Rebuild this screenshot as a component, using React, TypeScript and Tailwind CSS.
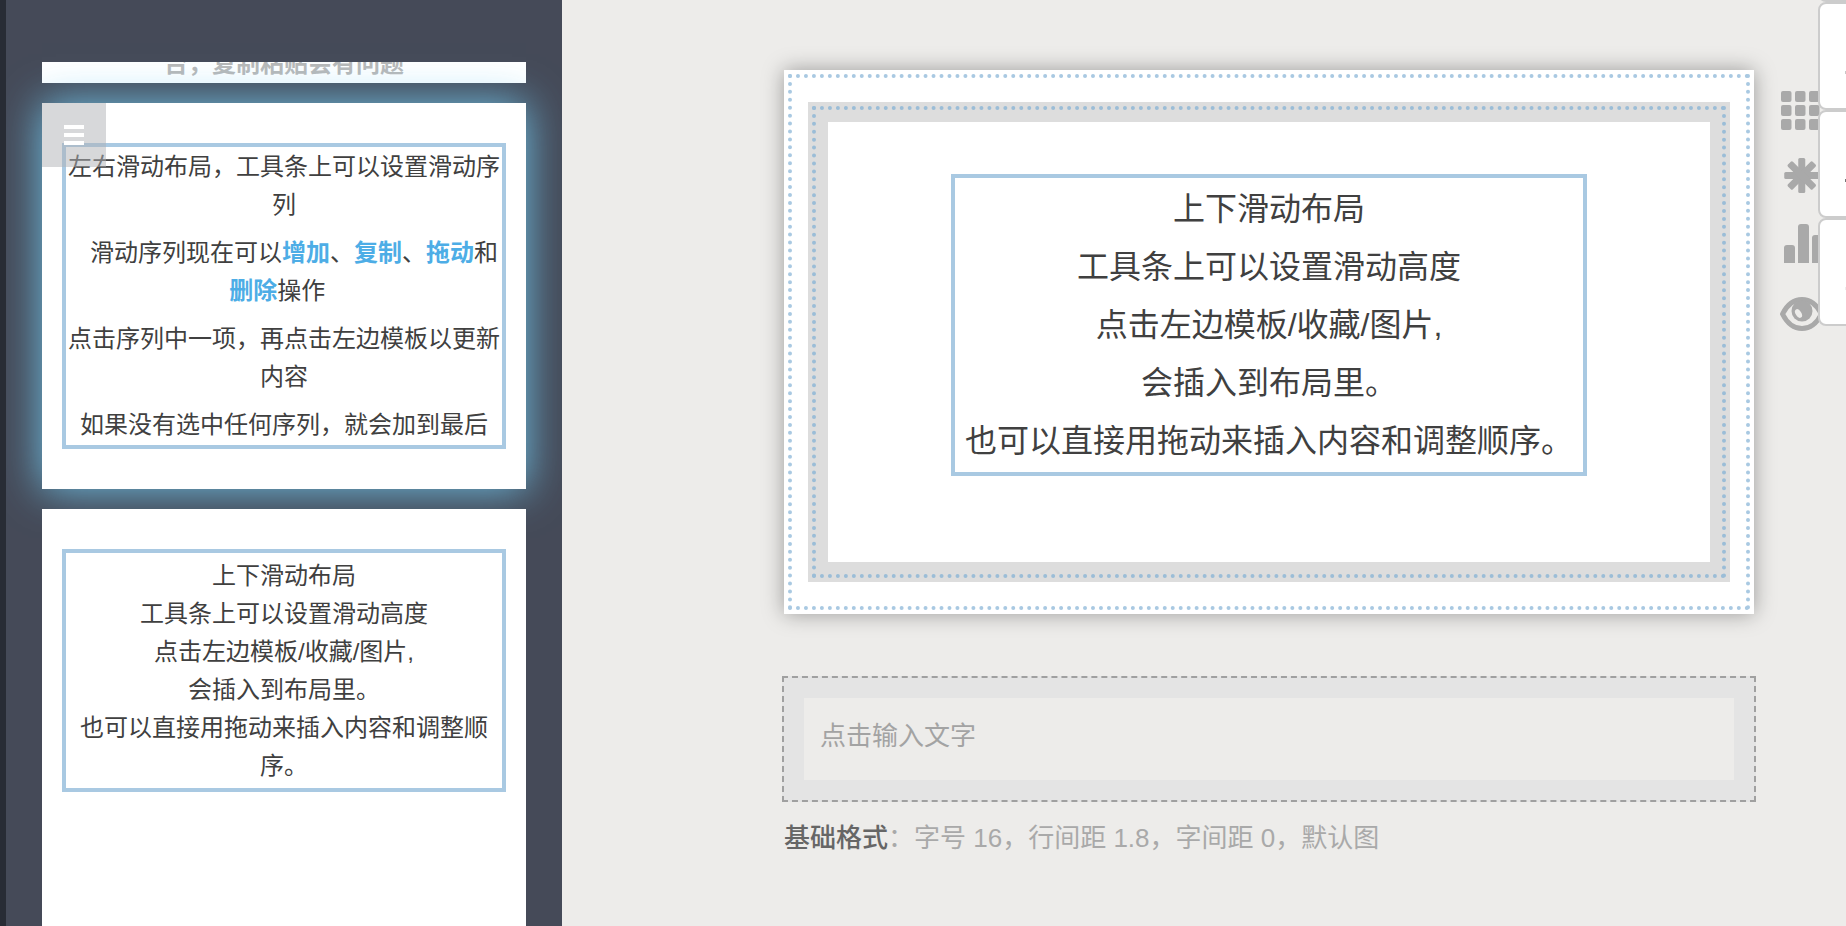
import React from "react";

function SlideFrame({ children, className }: { children: React.ReactNode; className: string }) {
  return <div className={`border-4 border-[#a9c9e2] text-center ${className}`}>{children}</div>;
}

function VerticalSlideText() {
  return (
    <>
      <p>上下滑动布局</p>
      <p>工具条上可以设置滑动高度</p>
      <p>点击左边模板/收藏/图片,</p>
      <p>会插入到布局里。</p>
      <p>也可以直接用拖动来插入内容和调整顺序。</p>
    </>
  );
}

function Accent({ children }: { children: React.ReactNode }) {
  return <strong className="font-bold text-[#4dade6]">{children}</strong>;
}

function GridIcon() {
  return (
    <svg viewBox="0 0 44 44" className="size-11" fill="currentColor" aria-hidden="true">
      {[0, 14, 28].map((y) =>
        [1, 15, 29].map((x) => <rect key={`${x}-${y}`} x={x} y={y} width="10.500" height="11" rx="2" />),
      )}
    </svg>
  );
}

function AsteriskIcon() {
  return (
    <svg viewBox="0 0 44 44" className="size-11" fill="currentColor" aria-hidden="true">
      {[0, 45, 90, 135].map((angle) => (
        <rect key={angle} x="18.250" y="1" width="7" height="35" rx="1.5" transform={`rotate(${angle} 21.750 18.500)`} />
      ))}
    </svg>
  );
}

function BarsIcon() {
  return (
    <svg viewBox="0 0 44 44" className="size-11" fill="currentColor" aria-hidden="true">
      <path d="M4 40V25q0-3 3-3h5q3 0 3 3v15zM18 40V4q0-3 3-3h5q3 0 3 3v36zM32 40V15q0-3 3-3h5q3 0 3 3v25z" />
    </svg>
  );
}

function EyeIcon() {
  return (
    <svg viewBox="0 0 44 44" className="size-11" aria-hidden="true">
      <path
        d="M2.500 25C7 16 14 10.500 22 10.500S37 16 41.500 25C37 34 30 39.500 22 39.500S7 34 2.500 25z"
        fill="none"
        stroke="currentColor"
        strokeWidth="5"
        strokeLinejoin="round"
      />
      <circle cx="22" cy="22" r="10.500" fill="currentColor" />
      <ellipse cx="18.500" cy="24.500" rx="2.800" ry="4.800" fill="#edecea" transform="rotate(-32 18.500 24.500)" />
    </svg>
  );
}

const tools = [
  { label: "模板", icon: <GridIcon /> },
  { label: "特效", icon: <AsteriskIcon /> },
  { label: "统计", icon: <BarsIcon /> },
  { label: "预览", icon: <EyeIcon /> },
];

export default function App() {
  return (
    <div className="relative flex h-screen overflow-hidden bg-[#edecea] font-['Liberation_Sans','Noto_Sans_CJK_SC',sans-serif] text-[#404040]">
      <div className="w-[6px] shrink-0 bg-[#282c35]" />

      <aside className="w-[556px] shrink-0 overflow-hidden bg-[#454a58] px-9 pt-[62px]">
        <div className="flex flex-col gap-5 text-2xl leading-[38px]">
          <section className="flex h-[21px] flex-col justify-end overflow-hidden bg-white text-center font-bold text-[#b8b8b8]">
            <p>台，复制粘贴会有问题</p>
          </section>

          <section className="relative bg-white px-5 py-10 shadow-[0_0_40px_rgba(116,206,245,0.9)]">
            <SlideFrame className="flex flex-col gap-[10px] py-px">
              <p>左右滑动布局，工具条上可以设置滑动序列</p>
              <p>
                &nbsp;&nbsp;&nbsp;滑动序列现在可以<Accent>增加</Accent>、<Accent>复制</Accent>、<Accent>拖动</Accent>和
                <Accent>删除</Accent>操作&nbsp;&nbsp;
              </p>
              <p>点击序列中一项，再点击左边模板以更新内容</p>
              <p>如果没有选中任何序列，就会加到最后</p>
            </SlideFrame>
            <button
              type="button"
              aria-label="菜单"
              className="absolute top-0 left-0 flex size-16 flex-col items-center justify-center gap-1 bg-[#b0b2b5]/50"
            >
              <span className="h-1 w-5 bg-white" />
              <span className="h-1 w-5 bg-white" />
              <span className="h-1 w-5 bg-white" />
            </button>
          </section>

          <section className="relative min-h-[480px] bg-white px-5 py-10">
            <SlideFrame className="pt-1 pb-[3px]">
              <VerticalSlideText />
            </SlideFrame>
          </section>
        </div>
      </aside>

      <main className="flex grow flex-col pt-[70px] pr-[90px] pl-[220px]">
        <div className="mx-[2px] bg-white p-1 shadow-[0_0_20px_rgba(0,0,0,0.35)]">
          <div className="border-4 border-dotted border-[#a9c9e2] px-4 py-6">
            <div className="bg-[#dddddd] p-1">
              <div className="border-4 border-dotted border-[#9bbdd7] p-3">
                <div className="flex min-h-[440px] items-start justify-center bg-white pt-[52px]">
                  <SlideFrame className="px-[10px] py-[2px] text-[32px] leading-[58px]">
                    <VerticalSlideText />
                  </SlideFrame>
                </div>
              </div>
            </div>
          </div>
        </div>

        <div className="mt-[62px] border-2 border-dashed border-[#a0a0a0] bg-[#e4e4e4] p-5">
          <input
            type="text"
            aria-label="点击输入文字"
            placeholder="点击输入文字"
            className="block h-[82px] w-full bg-[#edecea] px-4 pb-[6px] text-[26px] outline-none placeholder:text-[#a3a3a3]"
          />
        </div>
        <p className="mt-4 px-[2px] text-[26px] leading-10 text-[#a9a9a9]">
          <strong className="font-medium text-[#666666]">基础格式</strong>：字号 16，行间距 1.8，字间距 0，默认图
        </p>
      </main>

      <nav className="absolute top-[91px] right-[22px] flex flex-col gap-[22px] text-[#a9a9a9]">
        {tools.map((tool) => (
          <button key={tool.label} type="button" aria-label={tool.label}>
            {tool.icon}
          </button>
        ))}
      </nav>

      <div className="absolute -top-[106px] right-0 flex w-7 flex-col overflow-hidden">
        {["", "bg-[#c8c8c8]", "bg-[#777777]", "bg-[#eeeeee]"].map((mark, index) => (
          <div key={index} className="flex h-[108px] w-40 items-center rounded-lg border-2 border-[#cccccc] bg-white pt-8 pl-[25px]">
            <span className={`h-[3px] w-px ${mark}`} />
          </div>
        ))}
      </div>
    </div>
  );
}
